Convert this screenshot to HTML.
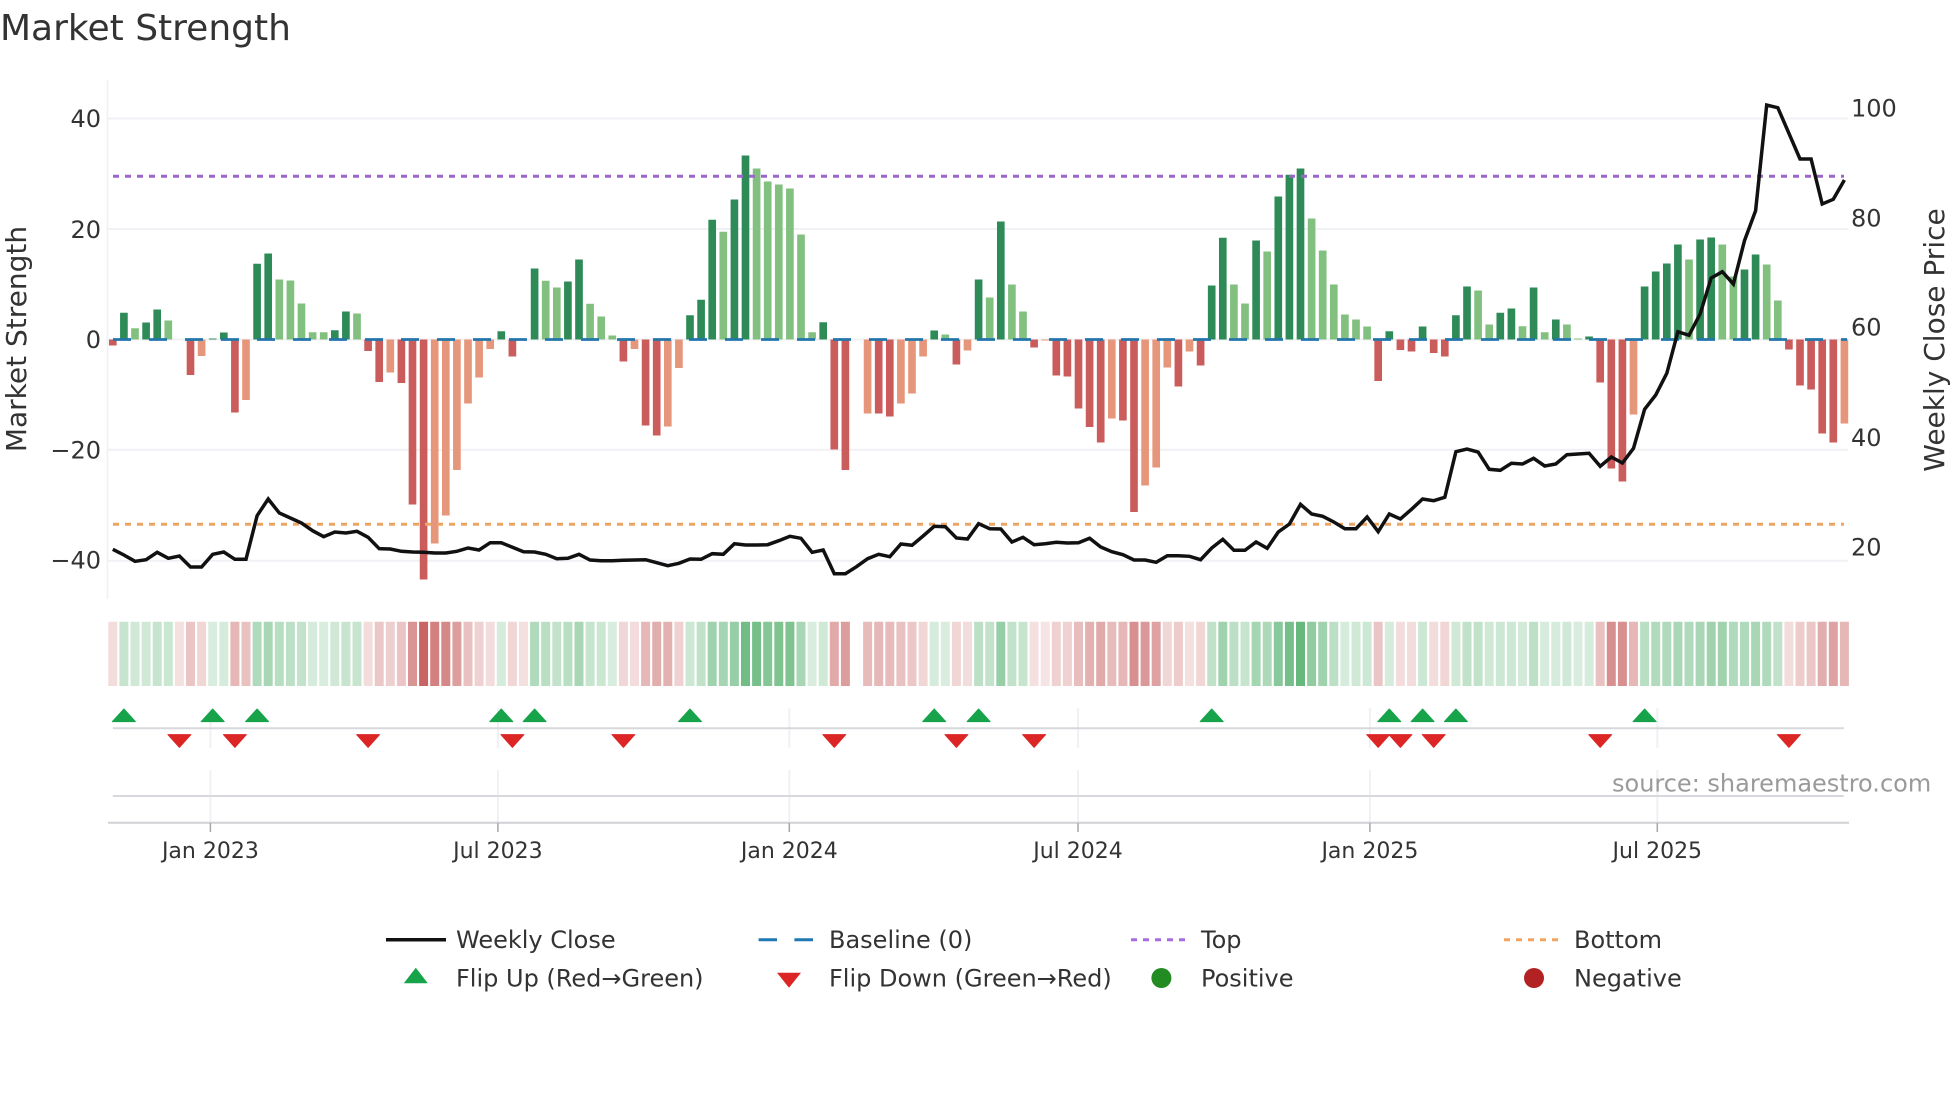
<!DOCTYPE html>
<html lang="en">
<head>
<meta charset="utf-8">
<title>Market Strength</title>
<style>
html,body{margin:0;padding:0;background:#fff;width:1960px;height:1102px;overflow:hidden}
svg{display:block}
text{font-family:"DejaVu Sans","Liberation Sans",sans-serif}
.t{fill:#333;font-size:24px}
.x{fill:#333;font-size:22px;text-anchor:middle}
.l{fill:#333;font-size:24px}
</style>
</head>
<body>
<svg width="1960" height="1102" viewBox="0 0 1960 1102" xmlns="http://www.w3.org/2000/svg">
<rect width="1960" height="1102" fill="#fff"/>
<text x="0" y="40" font-size="36" fill="#333">Market Strength</text>

<!-- grid -->
<path d="M107.5 80V599" stroke="#eef0f5" stroke-width="1.5" fill="none"/>
<path d="M108 118.5H1848M108 229H1848M108 339.5H1848M108 449.8H1848M108 560.7H1848" stroke="#f0f1f5" stroke-width="2" fill="none"/>

<!-- bars -->
<g fill="none" transform="translate(112.8 339.5) scale(11.1 1)" stroke-width=".69">
<path stroke="#2e8b57" d="M1 0v-26.7M3 0v-17M4 0v-30M9 0v-1M10 0v-7M13 0v-75.7M14 0v-86M20 0v-9.3M21 0v-28M35 0v-8.3M38 0v-71M41 0v-58M42 0v-80M52 0v-24.3M53 0v-39.7M54 0v-119.7M56 0v-140M57 0v-184M64 0v-17.3M74 0v-9M78 0v-60M80 0v-118M99 0v-54M100 0v-101.7M103 0v-99M105 0v-143M106 0v-164.7M107 0v-171M115 0v-8.3M118 0v-13M121 0v-24.3M122 0v-53M125 0v-26.7M126 0v-31M128 0v-52M130 0v-20M133 0v-3M138 0v-53M139 0v-68M140 0v-76M141 0v-95M143 0v-100M144 0v-102M147 0v-70M148 0v-85"/>
<path stroke="#81c07f" d="M2 0v-11.3M5 0v-19M15 0v-60M16 0v-59M17 0v-36M18 0v-7.3M19 0v-7.3M22 0v-26M39 0v-58.7M40 0v-52M43 0v-35.7M44 0v-23M45 0v-4M55 0v-107.7M58 0v-171M59 0v-158M60 0v-155M61 0v-151M62 0v-105M63 0v-7.3M75 0v-5M79 0v-42M81 0v-55M82 0v-28M101 0v-55M102 0v-36M104 0v-88M108 0v-121M109 0v-89M110 0v-55M111 0v-25M112 0v-20M113 0v-13M123 0v-49M124 0v-15M127 0v-13.3M129 0v-7.3M131 0v-15M132 0v-1M142 0v-80M145 0v-95M146 0v-63M149 0v-75M150 0v-39"/>
<path stroke="#cb5c5c" d="M0 0v6M7 0v35.5M11 0v73M23 0v11.5M24 0v42.5M26 0v43.5M27 0v165M28 0v240M36 0v17M46 0v22M48 0v86M49 0v96M65 0v110M66 0v130.5M69 0v74M70 0v77M76 0v25M83 0v8M85 0v36M86 0v37M87 0v69M88 0v87.5M89 0v103M91 0v81M92 0v172.5M96 0v47M98 0v26M114 0v41.5M116 0v10.5M117 0v12M119 0v13.5M120 0v17M134 0v43M135 0v129M136 0v142M151 0v10M152 0v46M153 0v50M154 0v94M155 0v103"/>
<path stroke="#e6967a" d="M8 0v16.5M12 0v60.5M25 0v33M29 0v204M30 0v176M31 0v130.5M32 0v64M33 0v38M34 0v9.5M47 0v9.5M50 0v87M51 0v28.5M68 0v74M71 0v64M72 0v54M73 0v17M77 0v11M84 0v1M90 0v79M93 0v146M94 0v128M95 0v28M97 0v12M137 0v75M156 0v84"/>
</g>

<!-- reference lines -->
<path d="M113 339.5H1847" stroke="#2376ab" stroke-width="2.8" stroke-dasharray="18 18" fill="none"/>
<path d="M113 176.3H1844" stroke="#9a66cc" stroke-width="3" stroke-dasharray="6 6" fill="none"/>
<path d="M113 524.3H1844" stroke="#eea564" stroke-width="3" stroke-dasharray="6 6" fill="none"/>

<!-- weekly close -->
<g transform="translate(112.8 0) scale(11.1 1)">
<polyline vector-effect="non-scaling-stroke" fill="none" stroke="#111" stroke-width="3.5" stroke-linejoin="miter" points="0,549.3 1,555 2,561.3 3,559.7 4,552.3 5,558.3 6,556 7,567 8,567 9,554.3 10,552 11,559.3 12,559.3 13,515.7 14,499 15,513 16,518 17,523 18,530.7 19,536.7 20,532 21,533 22,531.3 23,537.3 24,548.7 25,549 26,551.3 27,552 28,552.3 29,553 30,553 31,551.3 32,548 33,550 34,542.7 35,542.7 36,547.3 37,551.7 38,552 39,554.3 40,558.7 41,558.3 42,554.3 43,560 44,560.7 45,560.7 46,560.3 47,560 48,559.7 49,562.7 50,565.7 51,563.3 52,559 53,559.3 54,553.7 55,554.3 56,543.7 57,545 58,545 59,544.7 60,540.7 61,536.3 62,538.3 63,552.3 64,550 65,573.7 66,573.7 67,566.7 68,558.7 69,554.3 70,556.7 71,544 72,545.3 73,536 74,526.3 75,526.7 76,538 77,539 78,523.7 79,528.7 80,529 81,542 82,537.3 83,544.7 84,543.7 85,542.3 86,543 87,542.7 88,538.3 89,547 90,551.7 91,554.7 92,560 93,560 94,562.3 95,555.7 96,555.7 97,556.3 98,559.7 99,548 100,539.3 101,550.3 102,550.3 103,542 104,548.3 105,532 106,524 107,504.3 108,514 109,516.3 110,522 111,528.7 112,528.7 113,517 114,531.7 115,514 116,519 117,509.3 118,499 119,500.7 120,497.3 121,451.7 122,449 123,452 124,469.3 125,470.3 126,463.3 127,464 128,458.3 129,466 130,464 131,454.7 132,454 133,453.3 134,466.3 135,457 136,463 137,448.3 138,409.3 139,395 140,373.3 141,331.7 142,335.3 143,314 144,278 145,271.7 146,284 147,240.7 148,210.7 149,105 150,107.7 151,133.3 152,159 153,159 154,204 155,199.3 156,180"/>
</g>

<!-- heat strip -->
<g transform="translate(112.8 621.7) scale(11.1 1)" stroke-width=".81" fill="none" opacity=".93">
<g stroke="#b22222">
<path d="M0 0v64.3" stroke-opacity=".17"/><path d="M6 0v64.3" stroke-opacity=".15"/><path d="M7 0v64.3" stroke-opacity=".28"/><path d="M8 0v64.3" stroke-opacity=".2"/><path d="M11 0v64.3" stroke-opacity=".35"/><path d="M12 0v64.3" stroke-opacity=".3"/><path d="M23 0v64.3" stroke-opacity=".17"/><path d="M24 0v64.3" stroke-opacity=".27"/><path d="M25 0v64.3" stroke-opacity=".23"/><path d="M26 0v64.3" stroke-opacity=".28"/><path d="M27 0v64.3" stroke-opacity=".52"/><path d="M28 0v64.3" stroke-opacity=".75"/><path d="M29 0v64.3" stroke-opacity=".62"/><path d="M30 0v64.3" stroke-opacity=".58"/><path d="M31 0v64.3" stroke-opacity=".47"/><path d="M32 0v64.3" stroke-opacity=".3"/><path d="M33 0v64.3" stroke-opacity=".22"/><path d="M34 0v64.3" stroke-opacity=".17"/><path d="M36 0v64.3" stroke-opacity=".2"/><path d="M37 0v64.3" stroke-opacity=".15"/><path d="M46 0v64.3" stroke-opacity=".2"/><path d="M47 0v64.3" stroke-opacity=".17"/><path d="M48 0v64.3" stroke-opacity=".35"/><path d="M49 0v64.3" stroke-opacity=".4"/><path d="M50 0v64.3" stroke-opacity=".38"/><path d="M51 0v64.3" stroke-opacity=".22"/><path d="M65 0v64.3" stroke-opacity=".42"/><path d="M66 0v64.3" stroke-opacity=".48"/><path d="M68 0v64.3" stroke-opacity=".33"/><path d="M69 0v64.3" stroke-opacity=".35"/><path d="M70 0v64.3" stroke-opacity=".33"/><path d="M71 0v64.3" stroke-opacity=".3"/><path d="M72 0v64.3" stroke-opacity=".27"/><path d="M73 0v64.3" stroke-opacity=".2"/><path d="M76 0v64.3" stroke-opacity=".2"/><path d="M77 0v64.3" stroke-opacity=".17"/><path d="M83 0v64.3" stroke-opacity=".15"/><path d="M84 0v64.3" stroke-opacity=".13"/><path d="M85 0v64.3" stroke-opacity=".22"/><path d="M86 0v64.3" stroke-opacity=".22"/><path d="M87 0v64.3" stroke-opacity=".32"/><path d="M88 0v64.3" stroke-opacity=".38"/><path d="M89 0v64.3" stroke-opacity=".42"/><path d="M90 0v64.3" stroke-opacity=".33"/><path d="M91 0v64.3" stroke-opacity=".35"/><path d="M92 0v64.3" stroke-opacity=".55"/><path d="M93 0v64.3" stroke-opacity=".5"/><path d="M94 0v64.3" stroke-opacity=".45"/><path d="M95 0v64.3" stroke-opacity=".2"/><path d="M96 0v64.3" stroke-opacity=".25"/><path d="M97 0v64.3" stroke-opacity=".15"/><path d="M98 0v64.3" stroke-opacity=".2"/><path d="M114 0v64.3" stroke-opacity=".28"/><path d="M116 0v64.3" stroke-opacity=".17"/><path d="M117 0v64.3" stroke-opacity=".17"/><path d="M119 0v64.3" stroke-opacity=".17"/><path d="M120 0v64.3" stroke-opacity=".2"/><path d="M134 0v64.3" stroke-opacity=".3"/><path d="M135 0v64.3" stroke-opacity=".55"/><path d="M136 0v64.3" stroke-opacity=".55"/><path d="M137 0v64.3" stroke-opacity=".35"/><path d="M151 0v64.3" stroke-opacity=".17"/><path d="M152 0v64.3" stroke-opacity=".25"/><path d="M153 0v64.3" stroke-opacity=".27"/><path d="M154 0v64.3" stroke-opacity=".4"/><path d="M155 0v64.3" stroke-opacity=".45"/><path d="M156 0v64.3" stroke-opacity=".35"/>
</g>
<g stroke="#32a050">
<path d="M1 0v64.3" stroke-opacity=".3"/><path d="M2 0v64.3" stroke-opacity=".25"/><path d="M3 0v64.3" stroke-opacity=".25"/><path d="M4 0v64.3" stroke-opacity=".3"/><path d="M5 0v64.3" stroke-opacity=".28"/><path d="M9 0v64.3" stroke-opacity=".2"/><path d="M10 0v64.3" stroke-opacity=".22"/><path d="M13 0v64.3" stroke-opacity=".42"/><path d="M14 0v64.3" stroke-opacity=".45"/><path d="M15 0v64.3" stroke-opacity=".38"/><path d="M16 0v64.3" stroke-opacity=".35"/><path d="M17 0v64.3" stroke-opacity=".32"/><path d="M18 0v64.3" stroke-opacity=".22"/><path d="M19 0v64.3" stroke-opacity=".2"/><path d="M20 0v64.3" stroke-opacity=".25"/><path d="M21 0v64.3" stroke-opacity=".3"/><path d="M22 0v64.3" stroke-opacity=".3"/><path d="M35 0v64.3" stroke-opacity=".22"/><path d="M38 0v64.3" stroke-opacity=".42"/><path d="M39 0v64.3" stroke-opacity=".37"/><path d="M40 0v64.3" stroke-opacity=".32"/><path d="M41 0v64.3" stroke-opacity=".37"/><path d="M42 0v64.3" stroke-opacity=".45"/><path d="M43 0v64.3" stroke-opacity=".3"/><path d="M44 0v64.3" stroke-opacity=".28"/><path d="M45 0v64.3" stroke-opacity=".2"/><path d="M52 0v64.3" stroke-opacity=".27"/><path d="M53 0v64.3" stroke-opacity=".33"/><path d="M54 0v64.3" stroke-opacity=".5"/><path d="M55 0v64.3" stroke-opacity=".47"/><path d="M56 0v64.3" stroke-opacity=".55"/><path d="M57 0v64.3" stroke-opacity=".75"/><path d="M58 0v64.3" stroke-opacity=".72"/><path d="M59 0v64.3" stroke-opacity=".65"/><path d="M60 0v64.3" stroke-opacity=".68"/><path d="M61 0v64.3" stroke-opacity=".68"/><path d="M62 0v64.3" stroke-opacity=".45"/><path d="M63 0v64.3" stroke-opacity=".2"/><path d="M64 0v64.3" stroke-opacity=".25"/><path d="M74 0v64.3" stroke-opacity=".22"/><path d="M75 0v64.3" stroke-opacity=".2"/><path d="M78 0v64.3" stroke-opacity=".35"/><path d="M79 0v64.3" stroke-opacity=".32"/><path d="M80 0v64.3" stroke-opacity=".55"/><path d="M81 0v64.3" stroke-opacity=".32"/><path d="M82 0v64.3" stroke-opacity=".3"/><path d="M99 0v64.3" stroke-opacity=".33"/><path d="M100 0v64.3" stroke-opacity=".5"/><path d="M101 0v64.3" stroke-opacity=".35"/><path d="M102 0v64.3" stroke-opacity=".3"/><path d="M103 0v64.3" stroke-opacity=".48"/><path d="M104 0v64.3" stroke-opacity=".43"/><path d="M105 0v64.3" stroke-opacity=".62"/><path d="M106 0v64.3" stroke-opacity=".72"/><path d="M107 0v64.3" stroke-opacity=".8"/><path d="M108 0v64.3" stroke-opacity=".58"/><path d="M109 0v64.3" stroke-opacity=".5"/><path d="M110 0v64.3" stroke-opacity=".35"/><path d="M111 0v64.3" stroke-opacity=".22"/><path d="M112 0v64.3" stroke-opacity=".25"/><path d="M113 0v64.3" stroke-opacity=".27"/><path d="M115 0v64.3" stroke-opacity=".22"/><path d="M118 0v64.3" stroke-opacity=".27"/><path d="M121 0v64.3" stroke-opacity=".25"/><path d="M122 0v64.3" stroke-opacity=".33"/><path d="M123 0v64.3" stroke-opacity=".33"/><path d="M124 0v64.3" stroke-opacity=".25"/><path d="M125 0v64.3" stroke-opacity=".27"/><path d="M126 0v64.3" stroke-opacity=".27"/><path d="M127 0v64.3" stroke-opacity=".23"/><path d="M128 0v64.3" stroke-opacity=".35"/><path d="M129 0v64.3" stroke-opacity=".22"/><path d="M130 0v64.3" stroke-opacity=".22"/><path d="M131 0v64.3" stroke-opacity=".25"/><path d="M132 0v64.3" stroke-opacity=".2"/><path d="M133 0v64.3" stroke-opacity=".22"/><path d="M138 0v64.3" stroke-opacity=".37"/><path d="M139 0v64.3" stroke-opacity=".4"/><path d="M140 0v64.3" stroke-opacity=".42"/><path d="M141 0v64.3" stroke-opacity=".45"/><path d="M142 0v64.3" stroke-opacity=".42"/><path d="M143 0v64.3" stroke-opacity=".45"/><path d="M144 0v64.3" stroke-opacity=".5"/><path d="M145 0v64.3" stroke-opacity=".5"/><path d="M146 0v64.3" stroke-opacity=".42"/><path d="M147 0v64.3" stroke-opacity=".42"/><path d="M148 0v64.3" stroke-opacity=".45"/><path d="M149 0v64.3" stroke-opacity=".42"/><path d="M150 0v64.3" stroke-opacity=".33"/>
</g>
</g>

<!-- lower panels: vertical grid -->
<path d="M210.4 708V748M497.9 708V748M789.3 708V748M1078 708V748M1369.9 708V748M1657.3 708V748M210.4 770V822M497.9 770V822M789.3 770V822M1078 770V822M1369.9 770V822M1657.3 770V822" stroke="#f0f1f4" stroke-width="2" fill="none"/>
<path d="M112.8 728.3H1843.8M112.8 796H1843.8" stroke="#d6d8db" stroke-width="2" fill="none"/>
<path d="M108 822.7H1849" stroke="#d0d1d4" stroke-width="2" fill="none"/>
<path d="M210.4 823V832M497.9 823V832M789.3 823V832M1078 823V832M1369.9 823V832M1657.3 823V832" stroke="#a5a7aa" stroke-width="1.5" fill="none"/>

<!-- flip markers -->
<g fill="#16a34a" stroke="#16a34a" stroke-width="1" stroke-linejoin="round">
<path d="M123.9 721.6h-11.5l11.5-12.6 11.5 12.6z"/>
<path d="M212.7 721.6h-11.5l11.5-12.6 11.5 12.6z"/>
<path d="M257.1 721.6h-11.5l11.5-12.6 11.5 12.6z"/>
<path d="M501.3 721.6h-11.5l11.5-12.6 11.5 12.6z"/>
<path d="M534.6 721.6h-11.5l11.5-12.6 11.5 12.6z"/>
<path d="M690 721.6h-11.5l11.5-12.6 11.5 12.6z"/>
<path d="M934.2 721.6h-11.5l11.5-12.6 11.5 12.6z"/>
<path d="M978.6 721.6h-11.5l11.5-12.6 11.5 12.6z"/>
<path d="M1211.7 721.6h-11.5l11.5-12.6 11.5 12.6z"/>
<path d="M1389.3 721.6h-11.5l11.5-12.6 11.5 12.6z"/>
<path d="M1422.6 721.6h-11.5l11.5-12.6 11.5 12.6z"/>
<path d="M1455.9 721.6h-11.5l11.5-12.6 11.5 12.6z"/>
<path d="M1644.6 721.6h-11.5l11.5-12.6 11.5 12.6z"/>
</g>
<g fill="#dc2626" stroke="#dc2626" stroke-width="1" stroke-linejoin="round">
<path d="M179.4 734.6h-11.5l11.5 12.8 11.5-12.8z"/>
<path d="M234.9 734.6h-11.5l11.5 12.8 11.5-12.8z"/>
<path d="M368.1 734.6h-11.5l11.5 12.8 11.5-12.8z"/>
<path d="M512.4 734.6h-11.5l11.5 12.8 11.5-12.8z"/>
<path d="M623.4 734.6h-11.5l11.5 12.8 11.5-12.8z"/>
<path d="M834.3 734.6h-11.5l11.5 12.8 11.5-12.8z"/>
<path d="M956.4 734.6h-11.5l11.5 12.8 11.5-12.8z"/>
<path d="M1034.1 734.6h-11.5l11.5 12.8 11.5-12.8z"/>
<path d="M1378.2 734.6h-11.5l11.5 12.8 11.5-12.8z"/>
<path d="M1400.4 734.6h-11.5l11.5 12.8 11.5-12.8z"/>
<path d="M1433.7 734.6h-11.5l11.5 12.8 11.5-12.8z"/>
<path d="M1600.2 734.6h-11.5l11.5 12.8 11.5-12.8z"/>
<path d="M1788.9 734.6h-11.5l11.5 12.8 11.5-12.8z"/>
</g>

<!-- axis labels -->
<g class="t" text-anchor="end">
<text class="t" x="101" y="127">40</text>
<text class="t" x="101" y="238">20</text>
<text class="t" x="101" y="348">0</text>
<text class="t" x="101" y="458.7">−20</text>
<text class="t" x="101" y="568.7">−40</text>
</g>
<text class="t" x="1851" y="116.7" text-anchor="start">100</text>
<text class="t" x="1851" y="226.7" text-anchor="start">80</text>
<text class="t" x="1851" y="335.7" text-anchor="start">60</text>
<text class="t" x="1851" y="446" text-anchor="start">40</text>
<text class="t" x="1851" y="555.7" text-anchor="start">20</text>

<text transform="translate(26 339) rotate(-90)" text-anchor="middle" font-size="28" fill="#333">Market Strength</text>
<text transform="translate(1944 340) rotate(-90)" text-anchor="middle" font-size="28" fill="#333">Weekly Close Price</text>

<text class="x" x="210.4" y="858">Jan 2023</text>
<text class="x" x="497.9" y="858">Jul 2023</text>
<text class="x" x="789.3" y="858">Jan 2024</text>
<text class="x" x="1078" y="858">Jul 2024</text>
<text class="x" x="1369.9" y="858">Jan 2025</text>
<text class="x" x="1657.3" y="858">Jul 2025</text>

<text x="1612" y="791.7" font-size="24" fill="#9a9a9a">source: sharemaestro.com</text>

<!-- legend -->
<path d="M386 939.7H446" stroke="#111" stroke-width="3.5" fill="none"/>
<path d="M758.6 939.7H777M794.4 939.7H813" stroke="#1f77b4" stroke-width="3" fill="none"/>
<path d="M1131 939.7H1186" stroke="#a56ee0" stroke-width="3" stroke-dasharray="6 6" fill="none"/>
<path d="M1504 939.7H1559" stroke="#f4a460" stroke-width="3" stroke-dasharray="6 6" fill="none"/>
<text class="l" x="456" y="948">Weekly Close</text>
<text class="l" x="829" y="948">Baseline (0)</text>
<text class="l" x="1201" y="948">Top</text>
<text class="l" x="1574" y="948">Bottom</text>

<path d="M415.8 967.7l12 15.6h-24z" fill="#16a34a"/>
<path d="M777 972.7h24l-12 15z" fill="#dc2626"/>
<circle cx="1161.4" cy="978" r="10" fill="#228b22"/>
<circle cx="1534" cy="978" r="10" fill="#b22222"/>
<text class="l" x="456" y="986.7">Flip Up (Red→Green)</text>
<text class="l" x="829" y="986.7">Flip Down (Green→Red)</text>
<text class="l" x="1201" y="986.7">Positive</text>
<text class="l" x="1574" y="986.7">Negative</text>
</svg>
</body>
</html>
